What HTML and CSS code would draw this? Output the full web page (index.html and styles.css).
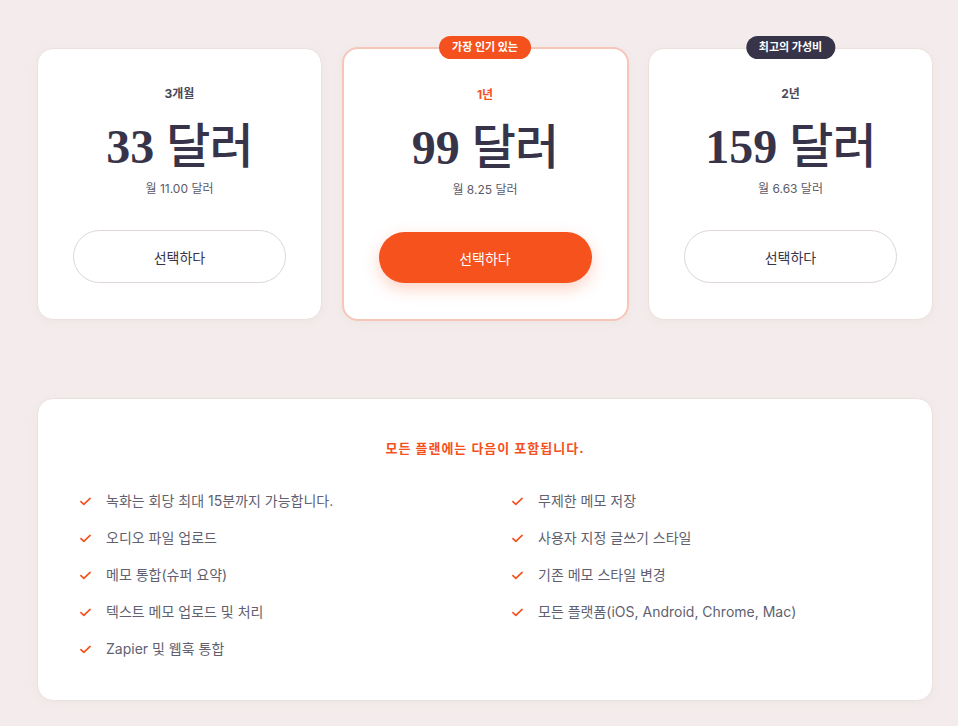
FILE: index.html
```html
<!DOCTYPE html>
<html lang="ko">
<head>
  <meta charset="UTF-8">
  <meta name="viewport" content="width=device-width, initial-scale=1.0">
  <title>요금제</title>
  <link rel="stylesheet" href="styles.css">
</head>
<body>
  <div class="page">
    <div class="plans">
      <div class="plan">
        <div class="term">3개월</div>
        <div class="price">33 <span class="unit">달러</span></div>
        <div class="monthly">월 11.00 달러</div>
        <button class="pick">선택하다</button>
      </div>

      <div class="plan hot">
        <span class="badge">가장 인기 있는</span>
        <div class="term">1년</div>
        <div class="price">99 <span class="unit">달러</span></div>
        <div class="monthly">월 8.25 달러</div>
        <button class="pick">선택하다</button>
      </div>

      <div class="plan">
        <span class="badge dark">최고의 가성비</span>
        <div class="term">2년</div>
        <div class="price">159 <span class="unit">달러</span></div>
        <div class="monthly">월 6.63 달러</div>
        <button class="pick">선택하다</button>
      </div>
    </div>

    <div class="features">
      <h3>모든 플랜에는 다음이 포함됩니다.</h3>
      <ul class="feature-list">
        <li><svg class="tick" viewBox="0 0 12 9"><path d="M1 4.6 L4.2 7.6 L11 1.2"/></svg>녹화는 회당 최대 15분까지 가능합니다.</li>
        <li><svg class="tick" viewBox="0 0 12 9"><path d="M1 4.6 L4.2 7.6 L11 1.2"/></svg>무제한 메모 저장</li>
        <li><svg class="tick" viewBox="0 0 12 9"><path d="M1 4.6 L4.2 7.6 L11 1.2"/></svg>오디오 파일 업로드</li>
        <li><svg class="tick" viewBox="0 0 12 9"><path d="M1 4.6 L4.2 7.6 L11 1.2"/></svg>사용자 지정 글쓰기 스타일</li>
        <li><svg class="tick" viewBox="0 0 12 9"><path d="M1 4.6 L4.2 7.6 L11 1.2"/></svg>메모 통합(슈퍼 요약)</li>
        <li><svg class="tick" viewBox="0 0 12 9"><path d="M1 4.6 L4.2 7.6 L11 1.2"/></svg>기존 메모 스타일 변경</li>
        <li><svg class="tick" viewBox="0 0 12 9"><path d="M1 4.6 L4.2 7.6 L11 1.2"/></svg>텍스트 메모 업로드 및 처리</li>
        <li><svg class="tick" viewBox="0 0 12 9"><path d="M1 4.6 L4.2 7.6 L11 1.2"/></svg>모든 플랫폼(iOS, Android, Chrome, Mac)</li>
        <li><svg class="tick" viewBox="0 0 12 9"><path d="M1 4.6 L4.2 7.6 L11 1.2"/></svg>Zapier 및 웹훅 통합</li>
      </ul>
    </div>
  </div>
</body>
</html>
```

FILE: styles.css
```css
body {
  margin: 0;
  background: #f4ecec;
  font-family: Inter, "Noto Sans CJK KR", sans-serif;
  color: #37344a;
}

.page {
  width: 896px;
  padding: 47px 0 26px 37px;
}

.plans {
  display: grid;
  grid-template-columns: 285px 287px 285px;
  column-gap: 19.5px;
  align-items: start;
}

.plan {
  position: relative;
  background: #fff;
  border: 1px solid #ebe1df;
  border-radius: 16px;
  box-shadow: 0 2px 10px rgba(120, 80, 70, 0.05);
  height: 272px;
  margin-top: 1px;
  box-sizing: border-box;
  display: flex;
  flex-direction: column;
  align-items: center;
  padding-top: 36px;
}

.plan.hot {
  border: 2px solid #f6c7b9;
  height: 274px;
  margin-top: 0;
  padding-top: 37px;
}

.badge {
  position: absolute;
  top: -13px;
  left: 50%;
  transform: translateX(-50%);
  background: #f4511e;
  color: #fff;
  font-size: 11px;
  font-weight: 700;
  line-height: 23px;
  padding: 0 13px;
  border-radius: 12px;
  white-space: nowrap;
}

.badge.dark {
  background: #37344a;
}

.term {
  font-size: 12px;
  font-weight: 700;
  color: #4a4858;
  line-height: 18px;
}

.hot .term {
  color: #f4511e;
}

.price {
  font-family: "Liberation Serif", "Noto Sans CJK KR", serif;
  font-weight: 700;
  font-size: 48px;
  line-height: 62px;
  margin-top: 8px;
  color: #37344a;
  white-space: nowrap;
}

.unit {
  font-family: "Noto Sans CJK KR", sans-serif;
  font-weight: 500;
  font-size: 48px;
  letter-spacing: -1px;
}

.monthly {
  font-size: 12px;
  color: #5c5a68;
  line-height: 18px;
  margin-top: 2px;
}

.pick {
  margin-top: 32px;
  width: 213px;
  height: 53px;
  border-radius: 27px;
  border: 1px solid #ddd6d3;
  background: #fff;
  font-family: Inter, "Noto Sans CJK KR", sans-serif;
  font-size: 14px;
  color: #37344a;
}

.hot .pick {
  margin-top: 33px;
  height: 51px;
  border: none;
  background: #f5521e;
  color: #fff;
  box-shadow: 0 6px 16px rgba(245, 82, 30, 0.25);
}

.features {
  margin-top: 77px;
  background: #fff;
  border: 1px solid #ebe1df;
  border-radius: 16px;
  box-shadow: 0 2px 10px rgba(120, 80, 70, 0.05);
  padding: 39px 42px 40px;
}

.features h3 {
  margin: 0;
  text-align: center;
  font-size: 13px;
  font-weight: 700;
  letter-spacing: 1px;
  line-height: 20px;
  color: #f4511e;
}

.feature-list {
  list-style: none;
  margin: 32px 0 0;
  padding: 0;
  display: grid;
  grid-template-columns: 1fr 1fr;
  column-gap: 54px;
  row-gap: 15px;
}

.feature-list li {
  display: flex;
  align-items: center;
  font-size: 14px;
  line-height: 22px;
  color: #615f70;
}

.tick {
  width: 11px;
  height: 9px;
  margin-right: 15px;
  flex: none;
}

.tick path {
  fill: none;
  stroke: #f4511e;
  stroke-width: 1.8;
  stroke-linecap: round;
  stroke-linejoin: round;
}
```
